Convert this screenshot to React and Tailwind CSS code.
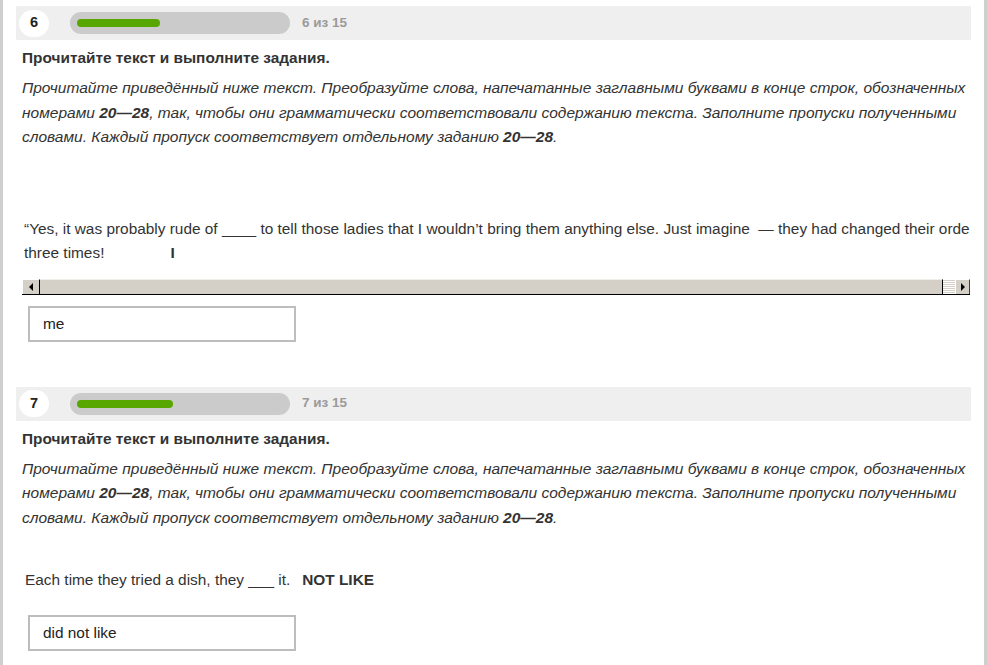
import React from "react";

const FONT = { fontFamily: '"Liberation Sans", Arial, sans-serif' };

function Header({ num, fill }) {
  return (
    <div className="flex h-[34px] items-center bg-[#efefef]">
      <div className="ml-[3px] flex h-[27px] w-[30px] items-center justify-center rounded-full bg-white text-[14.5px] font-bold text-[#222]">
        {num}
      </div>
      <div className="ml-[21px] flex h-[22px] w-[220px] items-center rounded-full bg-[#cbcbcb] px-[7px]">
        <div className="h-[8px] rounded-full bg-[#58a700]" style={{ width: fill }} />
      </div>
      <span className="ml-[12px] text-[13.5px] font-bold text-[#9a9a9a]">{num} из 15</span>
    </div>
  );
}

function Instructions() {
  return (
    <>
      <p className="mt-[8px] px-[6px] text-[15.4px] font-bold leading-[20px] text-[#333]">
        Прочитайте текст и выполните задания.
      </p>
      <p className="mt-[8px] pl-[6px] pr-[2px] text-[15.5px] italic leading-[24.5px] text-[#333]">
        Прочитайте приведённый ниже текст. Преобразуйте слова, напечатанные заглавными буквами в конце строк,
        обозначенных номерами <b>20—28</b>, так, чтобы они грамматически соответствовали содержанию текста.
        Заполните пропуски полученными словами. Каждый пропуск соответствует отдельному заданию <b>20—28</b>.
      </p>
    </>
  );
}

function Answer({ value }) {
  return (
    <div className="ml-[12px] flex h-[36px] w-[268px] items-center border-2 border-[#bdbdbd] bg-white px-[13px] text-[15.4px] text-[#222]">
      {value}
    </div>
  );
}

function Scrollbar() {
  return (
    <div className="flex h-[16px] border-b border-black bg-[#d4d0c8]">
      <div className="flex w-[18px] items-center justify-center border-t border-l border-white border-r border-r-black bg-[#d4d0c8]">
        <span className="h-0 w-0 border-y-[4px] border-r-[4px] border-y-transparent border-r-black" />
      </div>
      <div className="flex-1 border-t border-[#f0eee9] border-r border-r-black bg-[#d4d0c8]" />
      <div className="w-[12px] bg-[repeating-linear-gradient(to_bottom,#ffffff_0px,#ffffff_1px,#d4d0c8_1px,#d4d0c8_2px)]" />
      <div className="flex w-[15px] items-center justify-center border-t border-l border-white border-r border-r-[#404040] bg-[#d4d0c8]">
        <span className="h-0 w-0 border-y-[4px] border-l-[4px] border-y-transparent border-l-black" />
      </div>
    </div>
  );
}

export default function App() {
  return (
    <div className="min-h-[665px] w-[987px] border-x-[3px] border-[#cfcfcf] bg-white px-[13px] pt-[6px]" style={FONT}>
      {/* задание 6 */}
      <Header num={6} fill={83} />
      <Instructions />
      <div className="mt-[67px] ml-[6px] mr-[1px] overflow-hidden text-[15.4px] leading-[24px] text-[#333]">
        <div className="whitespace-nowrap pl-[2px]">
          “Yes, it was probably rude of ____ to tell those ladies that I wouldn’t bring them anything else. Just imagine&nbsp; — they had changed their order
        </div>
        <div className="flex whitespace-nowrap pl-[2px]">
          <span>three times!</span>
          <span className="ml-[66px] font-bold">I</span>
        </div>
      </div>
      <div className="mt-[14px] ml-[6px] mr-[1px]">
        <Scrollbar />
      </div>
      <div className="mt-[11px]">
        <Answer value="me" />
      </div>

      {/* задание 7 */}
      <div className="mt-[45px]">
        <Header num={7} fill={96} />
      </div>
      <Instructions />
      <div className="mt-[38px] flex whitespace-nowrap pl-[9px] text-[15.4px] leading-[24px] text-[#333]">
        <span>Each time they tried a dish, they ___ it.</span>
        <span className="ml-[12px] font-bold">NOT LIKE</span>
      </div>
      <div className="mt-[23px]">
        <Answer value="did not like" />
      </div>
    </div>
  );
}
